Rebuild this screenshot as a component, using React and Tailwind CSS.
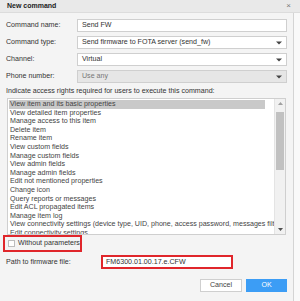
import React from "react";

const items = [
  "View item and its basic properties",
  "View detailed item properties",
  "Manage access to this item",
  "Delete item",
  "Rename item",
  "View custom fields",
  "Manage custom fields",
  "View admin fields",
  "Manage admin fields",
  "Edit not mentioned properties",
  "Change icon",
  "Query reports or messages",
  "Edit ACL propagated items",
  "Manage item log",
  "View connectivity settings (device type, UID, phone, access password, messages filter)",
  "Edit connectivity settings",
];

function Caret() {
  return (
    <svg width="6" height="4" viewBox="0 0 6 4" className="shrink-0">
      <path d="M0 0.5 L6 0.5 L3 3.5 Z" fill="#444" />
    </svg>
  );
}

function Row({ label, children }) {
  return (
    <div className="flex items-center h-[13px]">
      <div className="w-[71px] shrink-0 text-[#333]">{label}</div>
      {children}
    </div>
  );
}

export default function App() {
  return (
    <div
      className="w-[300px] h-[301px] bg-[#f9f9f9] overflow-hidden text-[7.1px] leading-[8.6px]"
      style={{ fontFamily: '"Liberation Sans", Arial, sans-serif' }}
    >
      <div className="h-[13px] bg-[#e9e9e9] flex items-center justify-between pl-[7px] pr-[9px] border-b border-[#dcdcdc]">
        <span className="font-bold text-[7px] text-[#222]">New command</span>
        <span className="text-[#777] text-[8px] leading-none">×</span>
      </div>
      <div className="w-[294px] h-[288px] bg-[#f4f4f4] border-r border-[#d4d4d4] pl-[6px] pr-[6px] pt-[6px] flex flex-col">
        <div className="flex flex-col gap-[4px]">
          <Row label="Command name:">
            <div className="w-[210px] h-[13px] bg-white border border-[#cfcfcf] flex items-center pl-[4px] text-[#333]">
              Send FW
            </div>
          </Row>
          <Row label="Command type:">
            <div className="w-[210px] h-[13px] bg-white border border-[#cfcfcf] flex items-center justify-between pl-[4px] pr-[4px] text-[#333]">
              <span>Send firmware to FOTA server (send_fw)</span>
              <Caret />
            </div>
          </Row>
          <Row label="Channel:">
            <div className="w-[210px] h-[13px] bg-white border border-[#cfcfcf] flex items-center justify-between pl-[4px] pr-[4px] text-[#333]">
              <span>Virtual</span>
              <Caret />
            </div>
          </Row>
          <Row label="Phone number:">
            <div className="w-[210px] h-[13px] bg-[#e6e6e6] border border-[#cfcfcf] flex items-center justify-between pl-[4px] pr-[4px] text-[#777]">
              <span>Use any</span>
              <Caret />
            </div>
          </Row>
        </div>
        <div className="mt-[3px] h-[10px] flex items-center text-[#333]">
          Indicate access rights required for users to execute this command:
        </div>
        <div className="ml-[1px] mt-[2px] w-[279px] h-[137px] bg-white border border-[#cfcfcf] flex overflow-hidden">
          <div className="flex-1 overflow-hidden pl-[1px] pt-[1px] text-[#444]">
            {items.map((t, i) => (
              <div
                key={i}
                className={
                  "h-[8.6px] whitespace-nowrap pl-[1px] " +
                  (i === 0 ? "bg-[#c9c9c9] w-[256px]" : "")
                }
              >
                {t}
              </div>
            ))}
          </div>
          <div className="w-[11px] shrink-0 bg-[#f1f1f1] border-l border-[#e4e4e4] flex flex-col items-center pt-[3px] pb-[3px]">
            <svg width="5" height="3" viewBox="0 0 5 3">
              <path d="M0 3 L5 3 L2.5 0 Z" fill="#a0a0a0" />
            </svg>
            <div className="mt-[7px] w-[8px] h-[58px] bg-[#c1c1c1]" />
            <div className="flex-1" />
            <svg width="5" height="3" viewBox="0 0 5 3">
              <path d="M0 0 L5 0 L2.5 3 Z" fill="#505050" />
            </svg>
          </div>
        </div>
        <div className="-ml-[3px] w-[79px] h-[17px] border-2 border-[#e0262b] flex items-center pl-[3px] gap-[3px] text-[#333]">
          <div className="w-[7px] h-[7px] bg-white border border-[#bdbdbd]" />
          <span>Without parameters</span>
        </div>
        <div className="mt-[3px] flex items-center h-[14px]">
          <div className="w-[95px] shrink-0 text-[#333]">Path to firmware file:</div>
          <div className="w-[132px] h-[14px] bg-white border-2 border-[#e0262b] flex items-center pl-[3px] text-[#333]">
            FM6300.01.00.17.e.CFW
          </div>
        </div>
        <div className="mt-[10px] flex justify-end gap-[4px] pr-[-1px]">
          <div className="w-[42px] h-[13px] bg-white border border-[#cfcfcf] flex items-center justify-center text-[#444]">
            Cancel
          </div>
          <div className="w-[41px] h-[13px] bg-[#3c9df5] flex items-center justify-center text-white">
            OK
          </div>
        </div>
      </div>
    </div>
  );
}
